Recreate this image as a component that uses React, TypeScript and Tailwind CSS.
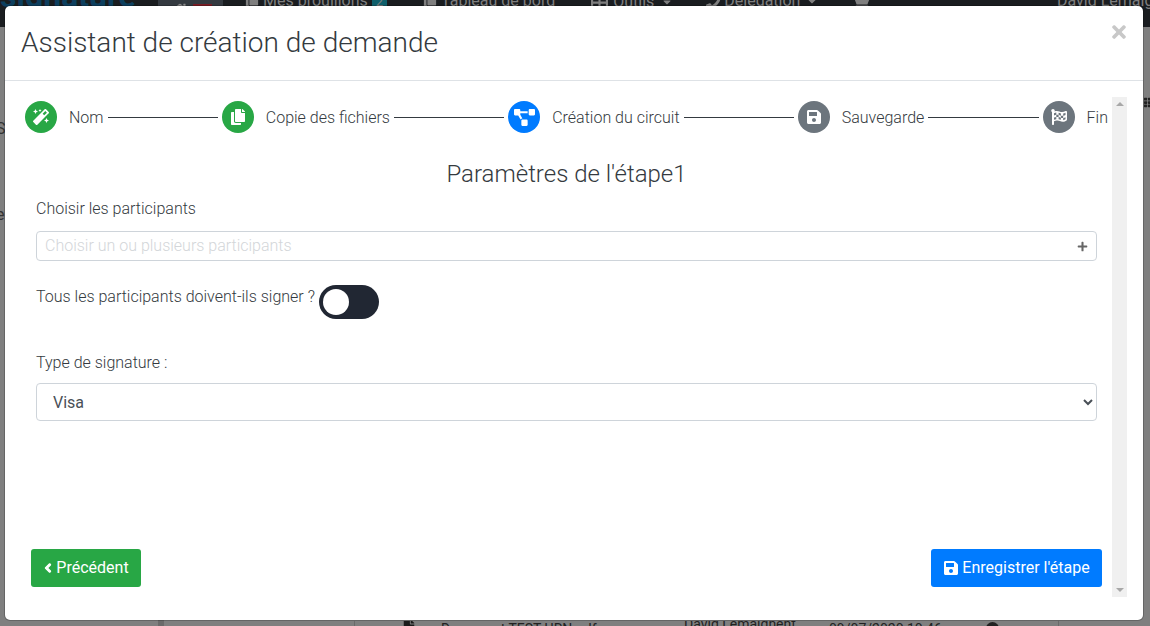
import React from "react";
import { FaMagic, FaCopy, FaProjectDiagram, FaSave, FaFlagCheckered, FaChevronLeft, FaPlus, FaTimes, FaHome, FaTable, FaPhone, FaCrown, FaCaretDown, FaTh, FaFileAlt } from "react-icons/fa";

const font = { fontFamily: "Roboto, sans-serif" };

function Step({ icon, label, color, line }: { icon: React.ReactNode; label: string; color: string; line?: boolean }) {
  return (
    <>
      <div className={`flex h-8 w-8 shrink-0 items-center justify-center rounded-full text-white text-base ${color}`}>{icon}</div>
      <span className="ml-3 shrink-0 pt-[2px] text-base font-light text-[#343a40]">{label}</span>
      {line && <div className="mx-1 h-px flex-1 bg-[#343a40]" />}
    </>
  );
}

export default function App() {
  return (
    <div className="relative h-[626px] w-[1150px] overflow-hidden bg-[#7f7f7f]" style={font}>
      {/* Page behind the overlay */}
      <div className="flex h-[27px] items-start overflow-hidden bg-[#1a1d20] text-[15px] leading-none text-[#7f7f7f]">
        <span className="mt-[-20px] w-[158px] shrink-0 text-[32px] font-bold text-[#0d3f5e]">signature</span>
        <div className="mt-[-8px] flex h-[36px] w-[65px] shrink-0 items-center bg-[#343a40] pl-[14px] text-[#8a8a8a]">
          <FaHome className="mr-[5px] text-[16px]" />
          <span className="bg-[#7a1c24] px-1.5 text-[13px]">7</span>
        </div>
        <span className="ml-[22px] mt-[-7px] flex items-center gap-1 text-[16px]"><FaCopy className="text-sm" />Mes brouillons<span className="bg-[#0f5f6b] px-1 text-[13px]">2</span></span>
        <span className="ml-[36px] mt-[-7px] flex items-center gap-1 text-[16px]"><FaCopy className="text-sm" />Tableau de bord</span>
        <span className="ml-[36px] mt-[-7px] flex items-center gap-[5px] text-[16px]"><FaTable className="text-[17px]" />Outils<FaCaretDown className="ml-[2px] text-xs" /></span>
        <span className="ml-[33px] mt-[-7px] flex items-center gap-[3px] text-[16px]"><FaPhone className="text-[15px]" />Délégation<FaCaretDown className="ml-[3px] text-xs" /></span>
        <span className="ml-[35px] mt-[-9px]"><FaCrown className="text-lg" /></span>
        <span className="ml-auto mt-[-7px] w-[93px] shrink-0 whitespace-nowrap text-[16px]">David Lemaignent</span>
      </div>

      {/* Fragments of the page showing beside the modal */}
      <span className="absolute left-[-4px] top-[117px] text-base text-[#333]">S</span>
      <span className="absolute left-[-4px] top-[203px] text-base text-[#333]">e</span>
      <FaTh className="absolute left-[1144px] top-[97px] text-[11px] text-[#222]" />
      <div className="absolute left-[158px] top-[620px] h-[6px] w-[6px] bg-[#6a6a6a]" />

      {/* Modal */}
      <div className="absolute left-[4px] top-[5px] flex h-[616px] w-[1140px] flex-col rounded-[6px] border border-black/20 bg-white bg-clip-padding">
        <div className="relative flex h-[75px] shrink-0 items-center border-b border-[#dee2e6] pl-4">
          <h5 className="text-[28px] font-light leading-none text-[#343a40]">Assistant de création de demande</h5>
          <FaTimes className="absolute right-[14px] top-[16px] text-[20px] text-[#c8c8c8]" />
        </div>
        <div className="flex min-h-0 flex-1 pl-5 pr-4 pt-4 pb-[23px]">
          <div className="flex min-w-0 flex-1 flex-col pr-1">
            <div className="mt-1 flex items-center">
              <Step icon={<FaMagic />} label="Nom" color="bg-[#28a745]" line />
              <Step icon={<FaCopy />} label="Copie des fichiers" color="bg-[#28a745]" line />
              <Step icon={<FaProjectDiagram className="text-[21px]" />} label="Création du circuit" color="bg-[#007bff]" line />
              <Step icon={<FaSave />} label="Sauvegarde" color="bg-[#6c757d]" line />
              <Step icon={<FaFlagCheckered />} label="Fin" color="bg-[#6c757d]" />
            </div>
            <h5 className="mt-[27px] text-center text-[24px] font-light leading-[29px] text-[#343a40]">Paramètres de l'étape1</h5>
            <div className="ml-[11px] mr-[11px] mt-[8px] flex flex-col">
              <label className="text-base font-light leading-6 text-[#343a40]">Choisir les participants</label>
              <div className="mt-[10px] flex h-[30px] items-center justify-between rounded border border-[#ced4da] pl-2 pr-[8px]">
                <span className="text-base font-light text-[#d3d6d9]">Choisir un ou plusieurs participants</span>
                <FaPlus className="text-[11px] text-[#666]" />
              </div>
              <div className="mt-6 flex items-start">
                <span className="text-base font-light leading-6 text-[#343a40]">Tous les participants doivent-ils signer ?</span>
                <div className="ml-1 flex h-[34px] w-[60px] items-center rounded-full bg-[#212733] pl-1">
                  <div className="h-[26px] w-[26px] rounded-full bg-white" />
                </div>
              </div>
              <label className="mt-[32px] text-base font-light leading-6 text-[#343a40]">Type de signature :</label>
              <select className="mt-[8px] h-[38px] w-full rounded border border-[#ced4da] bg-white pl-3 pr-1 text-base text-[#495057]" defaultValue="Visa">
                <option>Visa</option>
              </select>
            </div>
            <div className="mt-auto mr-[6px] ml-[6px] mb-[10px] flex justify-between">
              <button className="flex h-[38px] w-[110px] items-center justify-center gap-[3px] rounded-[3px] bg-[#28a745] text-base text-white">
                <FaChevronLeft className="stroke-[60px] text-[10px]" />Précédent
              </button>
              <button className="flex h-[38px] w-[171px] items-center justify-center gap-[3px] rounded-[3px] bg-[#007bff] text-base text-white">
                <FaSave className="text-base" />Enregistrer l'étape
              </button>
            </div>
          </div>
          <div className="flex w-[15px] shrink-0 flex-col items-center justify-between bg-[#f0f0f0] py-[5px]">
            <div className="h-0 w-0 border-x-[4px] border-b-[4px] border-x-transparent border-b-[#a8a8a8]" />
            <div className="h-0 w-0 border-x-[4px] border-t-[4px] border-x-transparent border-t-[#a8a8a8]" />
          </div>
        </div>
      </div>

      {/* Table row peeking below the modal */}
      <div className="absolute left-[354px] top-[621px] flex h-[5px] w-[796px] overflow-hidden border-l border-[#6a6a6a] text-[14px] leading-none text-[#222]">
        <FaFileAlt className="ml-[47px] mt-[-1px] shrink-0 text-[14px] text-[#1a1a1a]" />
        <span className="ml-[25px] mt-[1px] w-[243px] shrink-0 whitespace-nowrap">Document TEST URN.pdf</span>
        <span className="mt-[-4px] w-[145px] shrink-0 whitespace-nowrap">David Lemaignent</span>
        <span className="mt-[1px] w-[157px] shrink-0 whitespace-nowrap">09/07/2020 10:46</span>
        <span className="mt-[1px] h-[13px] w-[13px] shrink-0 rounded-full bg-[#222]" />
      </div>
      <div className="absolute left-[1058px] top-[621px] h-[5px] w-px bg-[#6a6a6a]" />
    </div>
  );
}
